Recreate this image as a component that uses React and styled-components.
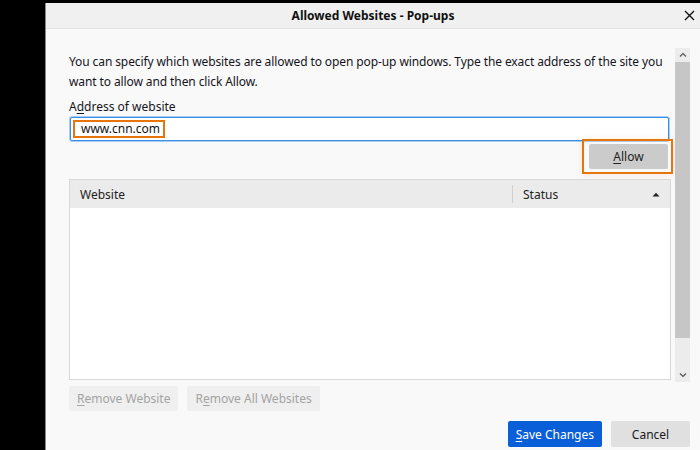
import React from 'react';
import styled, { createGlobalStyle } from 'styled-components';

const GlobalStyle = createGlobalStyle`
  html, body {
    margin: 0;
    padding: 0;
    background: #000;
  }
  body {
    font-family: 'Noto Sans', 'Open Sans', sans-serif;
    color: #15141a;
  }
`;

const Screen = styled.div`
  width: 700px;
  height: 450px;
  background: #000;
  display: flex;
  padding: 3px 0 0 45px;
  box-sizing: border-box;
  overflow: hidden;
`;

const Dialog = styled.div`
  flex: 1;
  height: 447px;
  background: #f9f9fa;
  display: flex;
  flex-direction: column;
  border-left: 1px solid #8a8a8a;
`;

const TitleBar = styled.div`
  height: 25px;
  flex: none;
  background: #f0f0f0;
  border-bottom: 1px solid #e2e2e2;
  display: flex;
  align-items: center;
  justify-content: center;
  position: relative;
  font-size: 12px;
  font-weight: 700;
  color: #111;
`;

const CloseButton = styled.span`
  position: absolute;
  right: 4px;
  top: 6px;
  width: 13px;
  height: 13px;
  display: flex;
  align-items: center;
  justify-content: center;
`;

const ScrollArea = styled.div`
  display: flex;
  flex: none;
  height: 388px;
`;

const Content = styled.div`
  flex: 1;
  min-width: 0;
  padding: 23px 4px 0 23px;
  display: flex;
  flex-direction: column;
`;

const Description = styled.p`
  margin: 0;
  font-size: 12px;
  letter-spacing: -0.1px;
  line-height: 20px;
  color: #15141a;
`;

const Label = styled.label`
  margin-top: 6px;
  font-size: 12px;
  line-height: 18px;
  color: #15141a;
`;

const AddressInput = styled.div`
  margin: 1px 2px 0 1px;
  height: 20px;
  padding: 1px 6px 1px 2px;
  border: 1px solid #3b8ee3;
  box-shadow: 0 0 0 1px #a9cdf2;
  border-radius: 2px;
  background: #fff;
  display: flex;
  align-items: center;
`;

const Highlight = styled.span`
  border: 2px solid #e8740c;
  padding: 0 3px 0 6px;
  font-size: 12px;
  line-height: 14px;
  color: #111;
`;

const AllowRow = styled.div`
  display: flex;
  justify-content: flex-end;
  margin: -2px -2px 0 0;
`;

const Annotation = styled.div`
  border: 2px solid #e8740c;
  padding: 3px 3px 3px 5px;
  box-shadow: 0 0 6px rgba(232, 116, 12, 0.15);
`;

const Button = styled.button`
  font-family: inherit;
  font-size: 12px;
  height: ${(p) => p.h || 25}px;
  min-width: ${(p) => p.w || 0}px;
  padding: 0 8px;
  border: none;
  border-radius: 2px;
  background: ${(p) => (p.primary ? '#0a5fd8' : p.disabled ? '#efefef' : '#e0e0e0')};
  color: ${(p) => (p.primary ? '#fff' : p.disabled ? '#a3a3a3' : '#1a1a1a')};
  display: flex;
  align-items: center;
  justify-content: center;
  cursor: default;
`;

const AllowButton = styled(Button)`
  background: #cbcbcb;
  color: #222;
`;

const Table = styled.div`
  margin-top: 5px;
  height: 199px;
  border: 1px solid #d8d8d8;
  background: #fff;
  display: flex;
  flex-direction: column;
`;

const TableHead = styled.div`
  height: 28px;
  background: #ebebeb;
  display: flex;
  align-items: center;
  font-size: 12px;
  color: #222;
`;

const HeadCell = styled.div`
  display: flex;
  align-items: center;
  justify-content: space-between;
  padding: 0 10px;
  height: 18px;
  flex: ${(p) => p.grow || 'none'};
  width: ${(p) => (p.width ? `${p.width}px` : 'auto')};
  box-sizing: border-box;
  border-left: ${(p) => (p.divider ? '1px solid #cfcfcf' : 'none')};
`;

const ButtonRow = styled.div`
  display: flex;
  gap: 9px;
  margin-top: 6px;
`;

const Scrollbar = styled.div`
  width: 15px;
  flex: 0 0 15px;
  height: 334px;
  margin: 19px 10px 0 0;
  background: #ececec;
  display: flex;
  flex-direction: column;
`;

const Arrow = styled.div`
  flex: 0 0 14px;
  display: flex;
  align-items: center;
  justify-content: center;
`;

const Thumb = styled.div`
  flex: 0 0 276px;
  background: #c6c6c6;
`;

const Track = styled.div`
  flex: 1;
`;

const Footer = styled.div`
  display: flex;
  justify-content: flex-end;
  gap: 9px;
  padding: 4px 10px 0 0;
`;

const U = styled.span`
  text-decoration: underline;
  text-underline-offset: 2px;
`;

const Chevron = ({ up }) => (
  <svg width="8" height="6" viewBox="0 0 8 6">
    <path
      d={up ? 'M1 4.5 L4 1.5 L7 4.5' : 'M1 1.5 L4 4.5 L7 1.5'}
      fill="none"
      stroke="#555"
      strokeWidth="1.2"
    />
  </svg>
);

const App = () => (
  <>
    <GlobalStyle />
    <Screen>
      <Dialog>
        <TitleBar>
          Allowed Websites - Pop-ups
          <CloseButton>
            <svg width="11" height="11" viewBox="0 0 11 11">
              <path d="M1 1 L10 10 M10 1 L1 10" stroke="#111" strokeWidth="1.4" />
            </svg>
          </CloseButton>
        </TitleBar>
        <ScrollArea>
          <Content>
            <Description>
              You can specify which websites are allowed to open pop-up windows. Type the exact
              address of the site you want to allow and then click Allow.
            </Description>
            <Label>
              A<U>d</U>dress of website
            </Label>
            <AddressInput>
              <Highlight>www.cnn.com</Highlight>
            </AddressInput>
            <AllowRow>
              <Annotation>
                <AllowButton w={79}>
                  <U>A</U>llow
                </AllowButton>
              </Annotation>
            </AllowRow>
            <Table>
              <TableHead>
                <HeadCell grow={1}>Website</HeadCell>
                <HeadCell width={158} divider>
                  Status
                  <svg width="8" height="5" viewBox="0 0 8 5">
                    <path d="M0.5 4.5 L4 0.8 L7.5 4.5 Z" fill="#222" />
                  </svg>
                </HeadCell>
              </TableHead>
            </Table>
            <ButtonRow>
              <Button disabled>
                <U>R</U>emove Website
              </Button>
              <Button disabled>
                R<U>e</U>move All Websites
              </Button>
            </ButtonRow>
          </Content>
          <Scrollbar>
            <Arrow>
              <Chevron up />
            </Arrow>
            <Thumb />
            <Track />
            <Arrow>
              <Chevron />
            </Arrow>
          </Scrollbar>
        </ScrollArea>
        <Footer>
          <Button primary w={92} h={26}>
            <U>S</U>ave Changes
          </Button>
          <Button w={79} h={26}>
            Cancel
          </Button>
        </Footer>
      </Dialog>
    </Screen>
  </>
);

export default App;
